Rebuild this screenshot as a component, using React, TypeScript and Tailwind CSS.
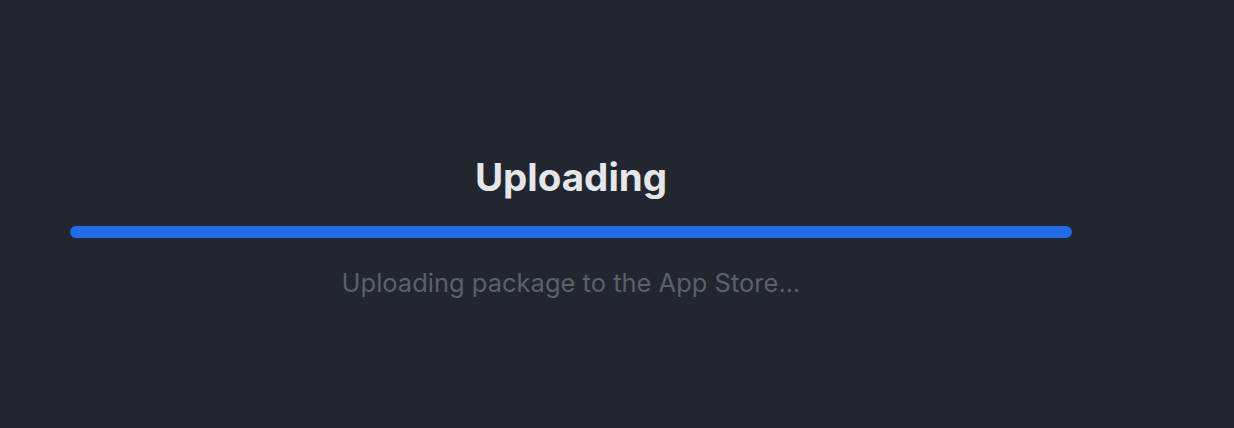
export default function App() {
  return (
    <div className="w-[1234px] h-[428px] bg-[#22262e] font-['Inter',sans-serif]">
      <div className="ml-[70px] w-[1002px] pt-[154px] flex flex-col items-center">
        <h1 className="text-[38.5px] leading-[46px] font-bold text-[#e4e6ea]">Uploading</h1>
        <div className="mt-[26px] w-full h-[12px] rounded-full bg-[#1f6be8]" />
        <p className="mt-[29px] text-[25.5px] leading-[32px] text-[#5a606c]">
          Uploading package to the App Store...
        </p>
      </div>
    </div>
  );
}
